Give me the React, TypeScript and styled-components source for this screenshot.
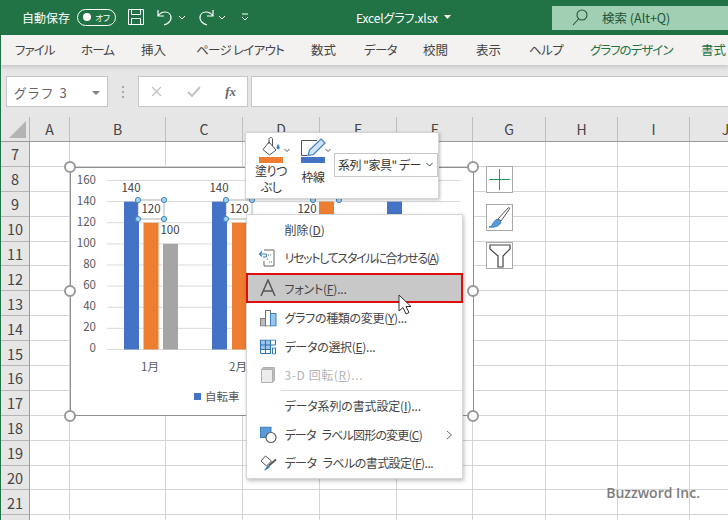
import React from "react";
import styled, { createGlobalStyle } from "styled-components";

const JP = `"Noto Sans CJK JP", "Noto Sans", sans-serif`;

const Global = createGlobalStyle`
  html, body { margin: 0; padding: 0; background: #fff; }
  body { width: 728px; height: 520px; overflow: hidden; font-family: ${JP}; font-feature-settings: "palt"; }
  #root { width: 728px; height: 520px; }
`;

const Page = styled.div`
  position: relative; width: 728px; height: 520px; overflow: hidden;
  display: flex; flex-direction: column; background: #fff;
  border-left: 1px solid #217346; box-sizing: border-box;
`;
const TitleBar = styled.div`
  height: 35px; margin-left: -1px; background: #217346; color: #fff; flex: none; box-sizing: border-box; padding-bottom: 1px;
  display: flex; align-items: center; position: relative; font-size: 12px;
`;
const AutoSave = styled.span`margin-left: 22px; width: 55px;`;
const Toggle = styled.div`
  height: 15px; border: 1px solid #fff; border-radius: 9px; display: flex; align-items: center;
  justify-content: space-between; padding: 0 5px; box-sizing: content-box; margin-right: 12px; flex: none; width: 27px;
  font-size: 8.5px;
`;
const Knob = styled.i`width: 8px; height: 8px; border-radius: 50%; background: #fff; display: block;`;
const QuickIcon = styled.svg<{ $gap?: number }>`flex: none; margin-right: ${p => p.$gap ?? 0}px;`;
const FileName = styled.div`
  margin-left: 107px; display: flex; align-items: center; gap: 6px; font-size: 12px; letter-spacing: -.15px; white-space: nowrap;
`;
const SearchBox = styled.div`
  margin-left: auto; margin-top: 1px; width: 176px; height: 24px; background: #a0cfb3; color: #22543a; flex: none;
  display: flex; align-items: center; font-size: 12.5px; gap: 14px; padding-left: 20px; box-sizing: border-box;
`;
const Tabs = styled.div`
  height: 30px; flex: none; background: #f3f2f1; display: flex; align-items: center; margin-left: -1px; padding: 0 0 2px 15px; box-sizing: border-box;
  font-size: 12.5px; color: #444; position: relative; z-index: 1;
  box-shadow: 0 2px 4px rgba(0,0,0,.14);
`;
const Tab = styled.span<{ $w: number; $green?: boolean; $sp?: number }>`
  width: ${p => p.$w}px; flex: none; white-space: nowrap;
  color: ${p => (p.$green ? "#217346" : "#444")};
  letter-spacing: ${p => p.$sp ?? 0}px;
`;
const FormulaBar = styled.div`
  height: 52px; flex: none; background: #e6e6e6; display: flex; align-items: flex-start; padding-top: 11px; box-sizing: border-box;
`;
const NameBox = styled.div`
  margin-left: 5px; width: 102px; height: 31px; box-sizing: border-box; background: #fff; border: 1px solid #c6c6c6;
  display: flex; align-items: center; justify-content: space-between; padding: 2px 7px 0 7px; font-size: 13px; color: #666; letter-spacing: 2.2px;
`;
const Dots = styled.div`
  width: 30px; height: 31px; display: flex; flex-direction: column; align-items: center; justify-content: center; gap: 3px;
  & > i { width: 2px; height: 2px; background: #a6a6a6; display: block; }
`;
const FxBox = styled.div`
  width: 110px; height: 31px; box-sizing: border-box; background: #fff; border: 1px solid #c6c6c6; display: flex; align-items: center;
  justify-content: space-between; padding: 0 11px 0 12px; color: #7a7a7a;
`;
const Fx = styled.span`font: italic bold 13px "Liberation Serif", serif; color: #666;`;
const Input = styled.div`
  flex: 1; margin-left: 3px; height: 31px; box-sizing: border-box; background: #fff; border: 1px solid #c6c6c6; border-right: none;
`;
const Sheet = styled.div`flex: 1; display: flex; flex-direction: column; position: relative; overflow: hidden;`;
const HeaderRow = styled.div`
  height: 25px; flex: none; display: flex; background: #e6e6e6; border-bottom: 1px solid #9b9b9b; box-sizing: border-box;
`;
const Corner = styled.div`
  width: 29px; flex: none; box-sizing: border-box; border-right: 1px solid #b5b5b5;
  display: flex; align-items: flex-end; justify-content: flex-end; padding: 0 3px 3px 0;
`;
const ColHead = styled.div<{ $w: number }>`
  width: ${p => p.$w}px; flex: none; box-sizing: border-box; border-right: 1px solid #bdbdbd; display: flex; align-items: center; justify-content: center;
  font-size: 14px; color: #444; padding-bottom: 1px;
`;
const Row = styled.div`height: 24.9px; flex: none; display: flex; box-sizing: border-box;`;
const RowHead = styled.div`
  width: 29px; flex: none; box-sizing: border-box; background: #e6e6e6; border-right: 1px solid #9b9b9b; border-bottom: 1px solid #b5b5b5;
  display: flex; align-items: center; justify-content: center; font-size: 14.5px; color: #444;
`;
const Cell = styled.div<{ $w: number }>`
  width: ${p => p.$w}px; flex: none; box-sizing: border-box; border-right: 1px solid #d4d4d4; border-bottom: 1px solid #d4d4d4;
`;
const Chart = styled.div`
  position: absolute; left: 69px; top: 50px; width: 404px; height: 249px; box-sizing: border-box; background: #fff; border: 1.5px solid #8f8f8f;
`;
const Handle = styled.i<{ $x: number; $y: number }>`
  position: absolute; left: ${p => p.$x - 7}px; top: ${p => p.$y - 6}px; width: 12px; height: 12px; box-sizing: border-box;
  border: 2px solid #999; border-radius: 50%; background: #fff; display: block; z-index: 2;
`;
const ChartSvg = styled.svg`position: absolute; left: -1.5px; top: -1.5px; font-family: ${JP};`;
const MiniBar = styled.div`
  position: absolute; left: 244px; top: 15px; width: 194px; height: 67px; box-sizing: border-box; background: #fff; z-index: 4;
  border: 1px solid #d4d4d4; box-shadow: 1px 1px 3px rgba(0,0,0,.25); font-size: 12px; color: #333;
  display: flex; padding-top: 3px;
`;
const MiniTool = styled.div<{ $w: number }>`
  width: ${p => p.$w}px; flex: none; display: flex; flex-direction: column; align-items: center; line-height: 16px; text-align: center;
`;
const MiniIcon = styled.svg`flex: none; overflow: visible; display: block;`;
const MiniLabel = styled.span<{ $top?: number }>`margin-top: ${p => p.$top ?? 0}px; letter-spacing: -.5px;`;
const Swatch = styled.i<{ $c: string }>`width: 24px; height: 6px; background: ${p => p.$c}; display: block; flex: none;`;
const MiniSelect = styled.div`
  margin: 17px 0 0 4px; width: 104px; height: 24px; box-sizing: border-box; border: 1px solid #c6c6c6; display: flex; align-items: center;
  justify-content: space-between; padding: 0 4px 2px 3px; font-size: 12px; white-space: nowrap; overflow: hidden; letter-spacing: -.5px;
`;
const Menu = styled.div`
  position: absolute; left: 244.5px; top: 97px; width: 217px; height: 265px; box-sizing: border-box; background: #fff; z-index: 4;
  border: 1px solid #d6d6d6; box-shadow: 1px 2px 4px rgba(0,0,0,.25); padding-top: 1px; display: flex; flex-direction: column;
  font-size: 12px; color: #444;
`;
const Item = styled.div<{ $active?: boolean; $off?: boolean; $h?: number; $sp?: number; $word?: number }>`
  height: ${p => p.$h ?? 28}px; flex: none; display: flex; align-items: center; position: relative; box-sizing: border-box; white-space: pre;
  padding: 0 0 2px 38px; color: ${p => (p.$off ? "#b4b4b4" : "#444")}; letter-spacing: ${p => p.$sp ?? 0}px;
  word-spacing: ${p => p.$word ?? 0}px;
  ${p => p.$active ? "background:#c8c8c8; border:2px solid #e00d0d; margin:1px -1px 0; padding:0 0 0 37px;" : ""}
  & u { text-underline-offset: 1px; }
`;
const ItemIcon = styled.span<{ $left?: number }>`
  position: absolute; left: ${p => p.$left ?? 13}px; top: 50%; transform: translateY(-50%); display: flex;
`;
const Arrow = styled.span`position: absolute; right: 9px; top: 50%; transform: translateY(-50%); display: flex;`;
const Sep = styled.div`height: 1px; background: #dcdcdc; margin: 1px 0 0 34px; flex: none;`;
const SideStack = styled.div`
  position: absolute; left: 485px; top: 49px; display: flex; flex-direction: column; gap: 11px; z-index: 3;
`;
const SideBtn = styled.div`
  width: 27px; height: 27px; box-sizing: border-box; border: 1px solid #a9a9a9; background: #fff; display: flex; align-items: center; justify-content: center;
`;
const Watermark = styled.div`
  position: absolute; right: 28px; bottom: 18px; font: 600 14px "Open Sans", sans-serif; color: #7d7d7d; z-index: 5; font-feature-settings: normal; line-height: 18px;
`;
const Cursor = styled.svg`position: absolute; left: 397px; top: 294px; z-index: 6;`;

const cols: [string, number][] = [["A", 40], ["B", 96], ["C", 77], ["D", 77], ["E", 77], ["F", 76], ["G", 73], ["H", 72], ["I", 72], ["J", 72]];
const rows = Array.from({ length: 16 }, (_, i) => i + 7);

const gy = (v: number) => 63.5 + (160 - v) * 1.056;
const ticks = [160, 140, 120, 100, 80, 60, 40, 20, 0];
const bars: [number, number, string][] = [
  [54, 140, "#4472c4"], [73.5, 120, "#ed7d31"], [93, 100, "#a5a5a5"],
  [142, 140, "#4472c4"], [162, 120, "#ed7d31"],
  [249, 140, "#ed7d31"], [317, 140, "#4472c4"],
];
const labels: [number, number, string][] = [[61, 25, "140"], [81, 46, "120"], [100, 67, "100"], [149, 25, "140"], [169, 46, "120"], [237, 46, "120"]];
const dots: [number, number][] = [[68, 33], [94, 33], [68, 52], [94, 52], [156, 33], [182, 33], [156, 52], [243, 33], [269, 33]];

export default function App() {
  return (
    <Page>
      <Global />
      <TitleBar>
        <AutoSave>自動保存</AutoSave>
        <Toggle><Knob /><span>オフ</span></Toggle>
        <QuickIcon width="16" height="16" viewBox="0 0 16 16" fill="none" stroke="#fff" $gap={13}>
          <path d="M.5.5h15v15H.5zM3.5.5v5h9v-5M3.5 15.5v-6h9v6" />
        </QuickIcon>
        <QuickIcon width="16" height="17" viewBox="0 0 16 17" fill="none" stroke="#fff" strokeWidth="1.2" $gap={5}>
          <path d="M1 1v6h6M1 7c2-3 4-4 7-4 4 0 6 3 6 6s-3 6-7 7" />
        </QuickIcon>
        <QuickIcon width="8" height="5" viewBox="0 0 8 5" fill="none" stroke="#fff" $gap={12}><path d="M1 1l3 3 3-3" /></QuickIcon>
        <QuickIcon width="16" height="17" viewBox="0 0 16 17" fill="none" stroke="#fff" strokeWidth="1.2" $gap={4}>
          <path d="M15 1v6H9M15 7c-2-3-4-4-7-4-4 0-6 3-6 6s3 6 7 7" />
        </QuickIcon>
        <QuickIcon width="8" height="5" viewBox="0 0 8 5" fill="none" stroke="#fff" $gap={15}><path d="M1 1l3 3 3-3" /></QuickIcon>
        <QuickIcon width="8" height="8" viewBox="0 0 8 8" fill="none" stroke="#fff"><path d="M1 1h6M1 4l3 3 3-3" /></QuickIcon>
        <FileName>
          <span>Excelグラフ.xlsx</span>
          <svg width="7" height="4" viewBox="0 0 7 4"><path d="M0 0h7L3.500 4z" fill="#fff" /></svg>
        </FileName>
        <SearchBox>
          <svg width="16" height="17" viewBox="0 0 16 17" fill="none" stroke="#22543a" strokeWidth="1.1"><circle cx="10" cy="6" r="5" /><path d="M6.500 10L1 16" /></svg>
          <span>検索 (Alt+Q)</span>
        </SearchBox>
      </TitleBar>
      <Tabs>
        <Tab $w={66} $sp={-.9}>ファイル</Tab>
        <Tab $w={60} $sp={-.9}>ホーム</Tab>
        <Tab $w={55}>挿入</Tab>
        <Tab $w={115} $sp={-.7}>ページ レイアウト</Tab>
        <Tab $w={53}>数式</Tab>
        <Tab $w={59} $sp={-.7}>データ</Tab>
        <Tab $w={53}>校閲</Tab>
        <Tab $w={53}>表示</Tab>
        <Tab $w={61} $sp={-.6}>ヘルプ</Tab>
        <Tab $w={111} $green $sp={-1}>グラフのデザイン</Tab>
        <Tab $w={27} $green>書式</Tab>
      </Tabs>
      <FormulaBar>
        <NameBox>
          <span>グラフ 3</span>
          <svg width="8" height="4" viewBox="0 0 8 4"><path d="M0 0h8L4 4z" fill="#7f7f7f" /></svg>
        </NameBox>
        <Dots><i /><i /><i /></Dots>
        <FxBox>
          <svg width="11" height="11" viewBox="0 0 11 11" stroke="#c4c4c4" strokeWidth="1.4"><path d="M1 1l9 9M10 1l-9 9" /></svg>
          <svg width="14" height="11" viewBox="0 0 14 11" fill="none" stroke="#c4c4c4" strokeWidth="2"><path d="M1 6l4 4 8-9" /></svg>
          <Fx>fx</Fx>
        </FxBox>
        <Input />
      </FormulaBar>
      <Sheet>
        <HeaderRow>
          <Corner>
            <svg width="17" height="17" viewBox="0 0 17 17"><path d="M17 0v17H0z" fill="#b4b4b4" /></svg>
          </Corner>
          {cols.map(([n, w]) => <ColHead key={n} $w={w}>{n}</ColHead>)}
        </HeaderRow>
        {rows.map(r => (
          <Row key={r}>
            <RowHead>{r < 22 ? r : ""}</RowHead>
            {cols.map(([n, w]) => <Cell key={n} $w={w} />)}
          </Row>
        ))}
        <Chart>
          <ChartSvg width="404" height="249" viewBox="0 0 404 249">
            {ticks.map(t => (
              <g key={t}>
                <line x1="37" x2="390" y1={gy(t) - 50} y2={gy(t) - 50} stroke="#d9d9d9" />
                <text x="26" y={gy(t) - 47} fontSize="11.5" textAnchor="end" fill="#595959">{t}</text>
              </g>
            ))}
            {bars.map(([x, v, c]) => (
              <rect key={x} x={x} y={gy(v) - 50} width="15" height={gy(0) - gy(v)} fill={c} />
            ))}
            <rect x="68" y="33" width="26" height="19" fill="#fff" stroke="#8f8f8f" strokeWidth=".7" />
            <rect x="156" y="33" width="26" height="19" fill="#fff" stroke="#8f8f8f" strokeWidth=".7" />
            {labels.map(([x, y, s]) => (
              <text key={x} x={x} y={y} fontSize="11.5" textAnchor="middle" fill="#404040">{s}</text>
            ))}
            {dots.map(([x, y], i) => (
              <circle key={i} cx={x} cy={y} r="2.6" fill="#a9d3f2" stroke="#3c8ac4" />
            ))}
            <text x="80" y="204" fontSize="11.5" textAnchor="middle" fill="#595959">1月</text>
            <text x="168" y="204" fontSize="11.5" textAnchor="middle" fill="#595959">2月</text>
            <rect x="124" y="226" width="7" height="7" fill="#4472c4" />
            <text x="135" y="234" fontSize="11.5" fill="#595959">自転車</text>
          </ChartSvg>
        </Chart>
        <Handle $x={70} $y={50} /><Handle $x={473} $y={50} />
        <Handle $x={70} $y={174} /><Handle $x={473} $y={174} />
        <Handle $x={70} $y={299} /><Handle $x={473} $y={299} />
        <MiniBar>
          <MiniTool $w={50}>
            <MiniIcon width="34" height="21" viewBox="0 0 34 21" fill="none" stroke="#555">
              <path d="M9 13.500L15 6l7 8-6.500 5z" />
              <path d="M15 8V3c0-2 3.500-2 3.500 0v7" />
              <path d="M24 8c1.500 2 2 3 1.500 4.500-.5 1-2.500 1-3-.5 0-1 .5-2.500 1.500-4z" fill="#3a87c8" stroke="none" />
              <path d="M30.500 13l2.500 2.500 2.500-2.500" />
            </MiniIcon>
            <Swatch $c="#ed7d31" />
            <MiniLabel>塗りつ<br />ぶし</MiniLabel>
          </MiniTool>
          <MiniTool $w={34}>
            <MiniIcon width="34" height="21" viewBox="0 0 34 21" fill="none" stroke="#555">
              <path d="M5.500 19.500V4.500H21M5.500 19.500H11" />
              <path d="M12 19.500l1.500-5.500L25 3l4 4-11.500 11.500z" fill="#cfe4f5" stroke="#3a7fc0" strokeWidth="1.2" />
              <path d="M29.500 13l2.500 2.500 2.500-2.500" />
            </MiniIcon>
            <Swatch $c="#4472c4" />
            <MiniLabel $top={6}>枠線</MiniLabel>
          </MiniTool>
          <MiniSelect>
            <span>系列 "家具" デー</span>
            <svg width="7" height="5" viewBox="0 0 7 5" fill="none" stroke="#444" style={{ flex: "none" }}><path d="M.5 1l3 3 3-3" /></svg>
          </MiniSelect>
        </MiniBar>
        <Menu>
          <Item>削除(<u>D</u>)</Item>
          <Item $sp={-1.3}>
            <ItemIcon $left={11}><svg width="20" height="20" viewBox="0 0 20 20" fill="none" stroke="#666"><path d="M6 2h10v16H6v-5" /><path d="M1.500 6h6c1.500 0 1.500 3 0 3H5M4 3.500L1.500 6 4 8.500" stroke="#3a7fc0" strokeWidth="1.2" /><path d="M10 7h3M9 11h1M11 14h3" strokeDasharray="1 1" /></svg></ItemIcon>
            リセットしてスタイルに合わせる(<u>A</u>)
          </Item>
          <Item $active $h={30} $sp={-.2}>
            <ItemIcon $left={12}><svg width="16" height="18" viewBox="0 0 16 18" fill="none" stroke="#555" strokeWidth="1.5"><path d="M1 17L8 1l7 16M3.500 12h9" /></svg></ItemIcon>
            フォント(<u>F</u>)...
          </Item>
          <Item $h={30} $sp={-.3}>
            <ItemIcon><svg width="17" height="17" viewBox="0 0 17 17"><rect x=".5" y="9" width="5" height="7.500" fill="#bcbcbc" stroke="#808080" /><rect x="5.500" y="1" width="5" height="15.500" fill="#fff" stroke="#707070" /><rect x="10.500" y="4" width="5.500" height="12.500" fill="#9dc3e6" stroke="#3a7fc0" /></svg></ItemIcon>
            グラフの種類の変更(<u>Y</u>)...
          </Item>
          <Item $sp={-.3}>
            <ItemIcon><svg width="16" height="15" viewBox="0 0 16 15" fill="none"><path d="M.5.500h10v10H.5z" fill="#9dc3e6" /><path d="M.5 14V.500h15v5M.5 5.500h15M.5 10h10M5.500.500V14M10.500.500V14H.5" stroke="#2f75b5" strokeWidth="1.100" /><path d="M12.500 8.500h3v6h-3z" fill="#fff" stroke="#2f75b5" /></svg></ItemIcon>
            データの選択(<u>E</u>)...
          </Item>
          <Item $off $sp={.6}>
            <ItemIcon $left={14}><svg width="14" height="16" viewBox="0 0 14 16"><path d="M2 .5h11.500v13L11.500 15.500V2.500H.5z" fill="#bdbdbd" stroke="#b0b0b0" /><path d="M.5 2.500h11v13H.5z" fill="#ececec" stroke="#b0b0b0" /></svg></ItemIcon>
            3-D 回転(<u>R</u>)...
          </Item>
          <Sep />
          <Item $h={30} $sp={-.15}>データ系列の書式設定(<u>I</u>)...</Item>
          <Item $sp={-.8} $word={4}>
            <ItemIcon><svg width="17" height="17" viewBox="0 0 17 17"><rect x=".5" y=".5" width="10.500" height="10.500" fill="#5b9bd5" stroke="#3a7fc0" /><circle cx="11" cy="11" r="5" fill="#fff" stroke="#555" strokeWidth="1.100" /></svg></ItemIcon>
            データ ラベル図形の変更(<u>C</u>)
            <Arrow><svg width="7" height="10" viewBox="0 0 7 10" fill="none" stroke="#666"><path d="M1 1l4.500 4L1 9" /></svg></Arrow>
          </Item>
          <Item $sp={-.55} $word={4}>
            <ItemIcon><svg width="17" height="17" viewBox="0 0 17 17" fill="none"><path d="M1 6.500l4.500-5 6 5-5 5z" stroke="#555" fill="#fff" /><path d="M9 11l7-6" stroke="#555" strokeWidth="1.800" /><path d="M4 16c2-.5 5-2 6-4l-2-1.500c-1.500 2-3 4-4 5.500z" fill="#3a7fc0" /></svg></ItemIcon>
            データ ラベルの書式設定(<u>F</u>)...
          </Item>
        </Menu>
        <SideStack>
          <SideBtn><svg width="21" height="21" viewBox="0 0 21 21" stroke="#1f9a57"><path d="M10.500 0v21M0 10.500h21" /></svg></SideBtn>
          <SideBtn><svg width="25" height="25" viewBox="0 0 25 25" fill="none"><path d="M11 14L21 3c1-1 2 0 1.500 1L14 16z" stroke="#555" /><path d="M2 22c4 0 3-5 8-8l4 3c-1 3-5 6-12 5z" fill="#5b9bd5" stroke="#3a7fc0" /></svg></SideBtn>
          <SideBtn><svg width="22" height="24" viewBox="0 0 22 24" fill="none" stroke="#444" strokeWidth="1.200"><path d="M1 1h20v4l-7 7v11H9V12L1 5z" /></svg></SideBtn>
        </SideStack>
        <Watermark>Buzzword Inc.</Watermark>
      </Sheet>
      <Cursor width="14" height="22" viewBox="0 0 14 22">
        <path d="M1 1v16l4-3.500 3 6.500 3-1.500-3-6h5z" fill="#fff" stroke="#333" />
      </Cursor>
    </Page>
  );
}
